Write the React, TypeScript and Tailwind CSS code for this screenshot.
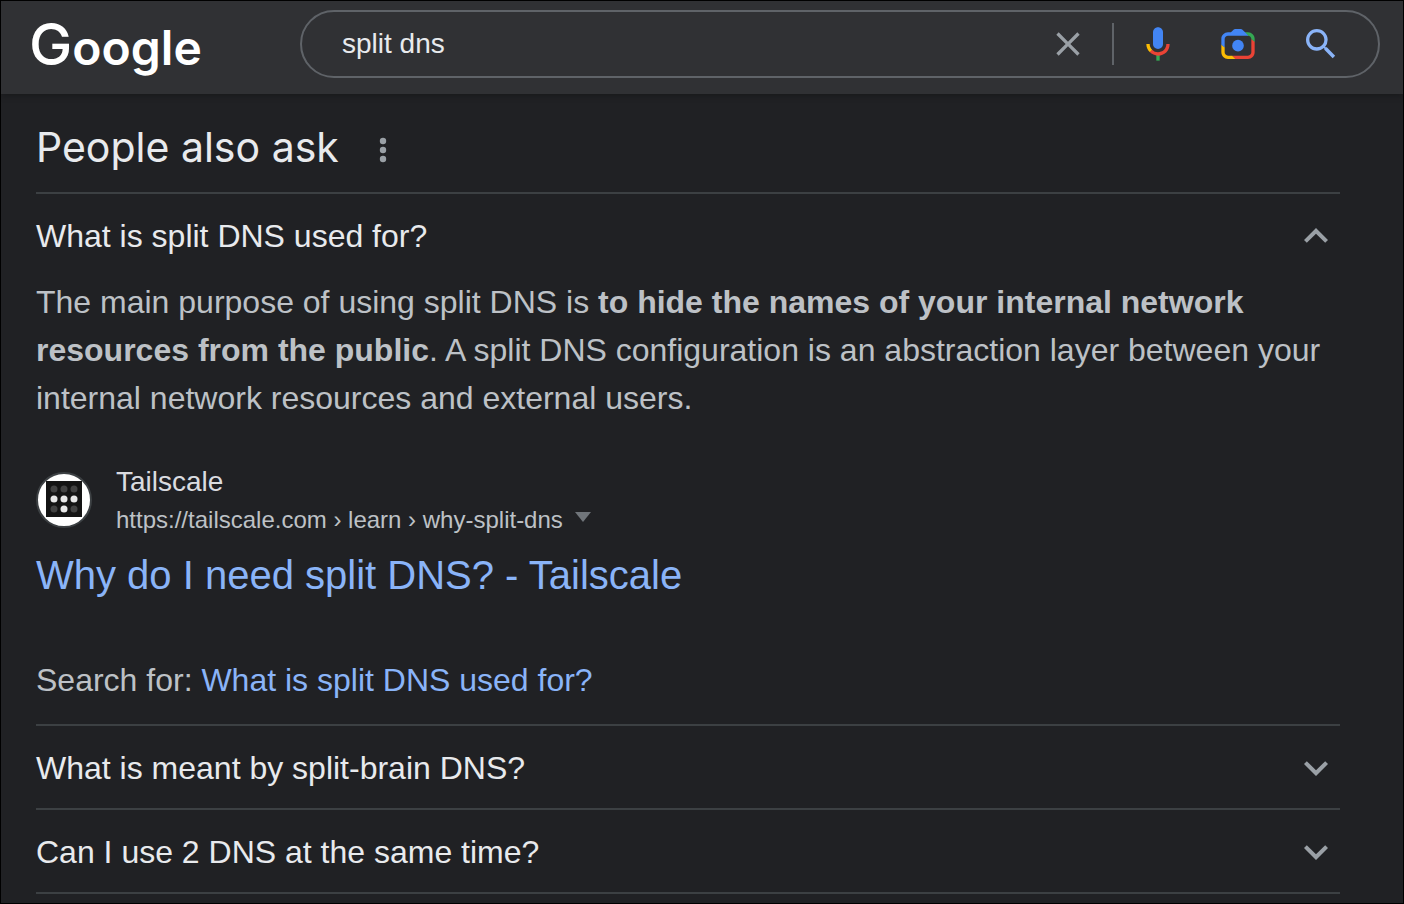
// App.tsx
import { useState } from "react";
import type { FormEvent } from "react";

const CloseIcon = () => (
  <svg className="size-10" viewBox="0 0 24 24" fill="#9aa0a6" aria-hidden="true">
    <path d="M19 6.41L17.59 5 12 10.59 6.41 5 5 6.41 10.59 12 5 17.59 6.41 19 12 13.41 17.59 19 19 17.59 13.41 12z" />
  </svg>
);

const MicIcon = () => (
  <svg className="size-10" viewBox="0 0 24 24" aria-hidden="true">
    <path fill="#4285f4" d="M12 15c1.66 0 3-1.31 3-2.97V5.01C15 3.35 13.66 2 12 2S9 3.34 9 5.01v7.02C9 13.69 10.34 15 12 15z" />
    <path fill="#34a853" d="M11 18.08h2V22h-2z" />
    <path fill="#fbbc04" d="M7.05 16.87C5.78 15.54 5 14.04 5 12h2c0 1.45.56 2.42 1.47 3.38v.32l-1.15 1.18z" />
    <path fill="#ea4335" d="M12 16.93a4.97 5.25 0 0 1-3.54-1.55l-1.41 1.49C8.31 18.21 10.07 19 12 19c3.87 0 6.99-2.92 6.99-7H17c0 2.92-2.24 4.93-5 4.93z" />
  </svg>
);

const LensIcon = () => (
  <svg className="size-10" viewBox="0 0 192 192" aria-hidden="true">
    <circle cx="96" cy="104" r="28" fill="#4285f4" />
    <path fill="#ea4335" d="M160 72v64c0 8.84-7.16 16-16 16H68l16 16h60c17.67 0 32-14.33 32-32V84z" />
    <path fill="#fbbc04" d="M32 136v-24L16 98v38c0 17.67 14.33 32 32 32h36l-16-16H48c-8.84 0-16-7.16-16-16z" />
    <path fill="#34a853" d="M144 40h-16l16 16c8.84 0 16 7.16 16 16l16 14V72c0-17.67-14.33-32-32-32z" />
    <path fill="#4285f4" d="M48 56h98l-16-16-9-9c-4-4.5-8-7-13-7H84c-5 0-9 2.5-13 7l-9 9H48c-17.67 0-32 14.33-32 32v27l16 14V72c0-8.84 7.16-16 16-16z" />
  </svg>
);

const SearchIcon = () => (
  <svg className="size-10" viewBox="0 0 24 24" fill="#8ab4f8" aria-hidden="true">
    <path d="M15.5 14h-.79l-.28-.27A6.47 6.47 0 0 0 16 9.5 6.5 6.5 0 1 0 9.5 16c1.61 0 3.09-.59 4.23-1.57l.27.28v.79l5 4.99L20.49 19l-4.99-5zm-6 0C7.01 14 5 11.99 5 9.5S7.01 5 9.5 5 14 7.01 14 9.5 11.99 14 9.5 14z" />
  </svg>
);

const Chevron = ({ open }: { open: boolean }) => (
  <svg className="size-12 shrink-0" viewBox="0 0 24 24" fill="#9aa0a6" aria-hidden="true">
    {open ? (
      <path d="M12 8l-6 6 1.41 1.41L12 10.83l4.59 4.58L18 14z" />
    ) : (
      <path d="M16.59 8.59L12 13.17 7.41 8.59 6 10l6 6 6-6z" />
    )}
  </svg>
);

const TailscaleIcon = () => (
  <svg className="size-14 shrink-0" viewBox="0 0 56 56" aria-hidden="true">
    <circle cx="28" cy="28" r="27" fill="#fff" stroke="#3c4043" strokeWidth="2" />
    <path fill="#141414" d="M10 9h36v36H10z" />
    <g fill="#424242">
      <circle cx="18" cy="17" r="3.5" />
      <circle cx="28" cy="17" r="3.5" />
      <circle cx="38" cy="17" r="3.5" />
      <circle cx="18" cy="37" r="3.5" />
      <circle cx="38" cy="37" r="3.5" />
    </g>
    <g fill="#e8e8e8">
      <circle cx="18" cy="27" r="3.5" />
      <circle cx="28" cy="27" r="3.5" />
      <circle cx="38" cy="27" r="3.5" />
      <circle cx="28" cy="37" r="3.5" />
    </g>
  </svg>
);

const Header = () => {
  const [query, setQuery] = useState("split dns");

  const handleSubmit = (e: FormEvent) => e.preventDefault();

  return (
    <header className="flex items-center bg-[#303134] pt-[9px] pb-4 pl-7 pr-[23px] shadow-[0_2px_6px_rgba(0,0,0,0.25)]">
      <a href="#" className="w-[271px] shrink-0 pt-1 font-['Inter',sans-serif] text-5xl leading-15 font-semibold text-white">
        <span className="text-[58px] leading-none font-medium">G</span>oogle
      </a>
      <form
        onSubmit={handleSubmit}
        className="flex h-[68px] flex-1 items-center rounded-full border-2 border-[#5f6368] pl-10 pr-[37px]"
      >
        <input
          type="text"
          aria-label="Search"
          value={query}
          onChange={(e) => setQuery(e.target.value)}
          className="min-w-0 flex-1 bg-transparent text-[28px] leading-10 text-[#e8eaed] outline-none"
        />
        <button type="button" aria-label="Clear" onClick={() => setQuery("")}>
          <CloseIcon />
        </button>
        <span className="ml-6 h-[42px] w-0.5 bg-[#5f6368]" />
        <button type="button" aria-label="Search by voice" className="ml-6">
          <MicIcon />
        </button>
        <button type="button" aria-label="Search by image" className="ml-10">
          <LensIcon />
        </button>
        <button type="submit" aria-label="Google Search" className="ml-[43px]">
          <SearchIcon />
        </button>
      </form>
    </header>
  );
};

const Answer = () => (
  <div className="pt-0.5 pb-5">
    <p className="text-[32px] leading-12 text-[#bdc1c6]">
      The main purpose of using split DNS is{" "}
      <b>to hide the names of your internal network resources from the public</b>. A split DNS
      configuration is an abstraction layer between your internal network resources and external users.
    </p>
    <div className="mt-10 flex items-center gap-6">
      <TailscaleIcon />
      <div>
        <div className="text-[28px] leading-10 text-[#dadce0]">Tailscale</div>
        <div className="flex items-center gap-3 text-2xl leading-9 text-[#bdc1c6]">
          <span>https://tailscale.com › learn › why-split-dns</span>
          <button type="button" aria-label="About this result" className="pb-1.5">
            <svg className="h-[10px] w-4" viewBox="0 0 16 10" fill="#70757a" aria-hidden="true">
              <path d="M0 0h16L8 10z" />
            </svg>
          </button>
        </div>
      </div>
    </div>
    <h3 className="mt-3 text-[40px] leading-[50px]">
      <a href="#" className="text-[#8ab4f8]">
        Why do I need split DNS? - Tailscale
      </a>
    </h3>
    <p className="mt-14 text-[32px] leading-12 text-[#bdc1c6]">
      Search for:{" "}
      <a href="#" className="text-[#8ab4f8]">
        What is split DNS used for?
      </a>
    </p>
  </div>
);

const questions = [
  { title: "What is split DNS used for?", answer: <Answer /> },
  { title: "What is meant by split-brain DNS?", answer: null },
  { title: "Can I use 2 DNS at the same time?", answer: null },
];

const App = () => {
  const [openIndex, setOpenIndex] = useState<number | null>(0);

  return (
    <div className="min-h-screen border border-black bg-[#202124] font-['Liberation_Sans',Arial,sans-serif]">
      <Header />
      <main className="pl-[35px] pr-[63px]">
        <div className="flex items-center gap-[22px] pt-[25px] pb-[17px]">
          <h2 className="font-['Inter',sans-serif] text-[41px] leading-14 text-[#e8eaed]">People also ask</h2>
          <button type="button" aria-label="About this result">
            <svg className="size-11" viewBox="0 0 44 44" fill="#9aa0a6" aria-hidden="true">
              <circle cx="22" cy="16" r="3.2" />
              <circle cx="22" cy="25" r="3.2" />
              <circle cx="22" cy="34" r="3.2" />
            </svg>
          </button>
        </div>
        <div className="border-b-2 border-[#3c4043]">
          {questions.map((q, i) => {
            const open = openIndex === i;
            return (
              <div key={q.title} className="border-t-2 border-[#3c4043]">
                <button
                  type="button"
                  aria-expanded={open}
                  onClick={() => setOpenIndex(open ? null : i)}
                  className="flex w-full items-center justify-between pt-[18px] pb-4 text-left text-[32px] leading-12 text-[#e8eaed]"
                >
                  {q.title}
                  <Chevron open={open} />
                </button>
                {open && q.answer}
              </div>
            );
          })}
        </div>
      </main>
    </div>
  );
};

export default App;
